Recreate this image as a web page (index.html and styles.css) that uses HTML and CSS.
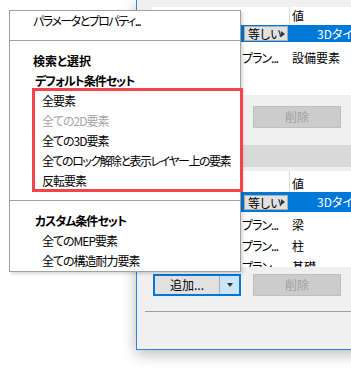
FILE: index.html
```html
<!DOCTYPE html>
<html lang="ja">
<head>
  <meta charset="UTF-8">
  <meta name="viewport" content="width=device-width, initial-scale=1.0">
  <title>フィルタ</title>
  <link rel="stylesheet" href="styles.css">
</head>
<body>
  <div class="dialog">
    <div class="grid grid-top">
      <div class="grid-head"><span></span><span></span><span class="head-val">値</span></div>
      <div class="grid-row selected">
        <span></span>
        <span class="cond"><span class="op">等しい<i class="tri"></i></span></span>
        <span class="val">3Dタイプ</span>
      </div>
      <div class="grid-row">
        <span></span><span class="cond">プラン...</span><span class="val">設備要素</span>
      </div>
    </div>

    <div class="actions actions-top">
      <div class="btn">追加...</div>
      <div class="btn btn-off">削除</div>
    </div>

    <div class="band"></div>

    <div class="grid grid-bottom">
      <div class="grid-head"><span></span><span></span><span class="head-val">値</span></div>
      <div class="grid-row selected">
        <span></span>
        <span class="cond"><span class="op">等しい<i class="tri"></i></span></span>
        <span class="val">3Dタイプ</span>
      </div>
      <div class="grid-row">
        <span></span><span class="cond">プラン...</span><span class="val">梁</span>
      </div>
      <div class="grid-row">
        <span></span><span class="cond">プラン...</span><span class="val">柱</span>
      </div>
      <div class="grid-row">
        <span></span><span class="cond">プラン...</span><span class="val">基礎</span>
      </div>
    </div>

    <div class="actions actions-bottom">
      <div class="split">
        <span class="split-main">追加...</span>
        <span class="split-drop"><i class="down"></i></span>
      </div>
      <div class="btn btn-off">削除</div>
    </div>

    <div class="rule"></div>
  </div>

  <!-- popup menu over the dialog -->
  <div class="menu">
    <div class="menu-item first">パラメータとプロパティ...</div>
    <div class="menu-sep"></div>
    <div class="menu-head kanji">検索と選択</div>
    <div class="menu-head">デフォルト条件セット</div>
    <div class="menu-item">全要素</div>
    <div class="menu-item disabled">全ての2D要素</div>
    <div class="menu-item">全ての3D要素</div>
    <div class="menu-item long">全てのロック解除と表示レイヤー上の要素</div>
    <div class="menu-item">反転要素</div>
    <div class="menu-sep"></div>
    <div class="menu-head">カスタム条件セット</div>
    <div class="menu-item">全てのMEP要素</div>
    <div class="menu-item">全ての構造耐力要素</div>
  </div>

  <div class="highlight"></div>
</body>
</html>
```

FILE: styles.css
```css
* {
  box-sizing: border-box;
}

body {
  margin: 0;
  width: 351px;
  height: 372px;
  overflow: hidden;
  position: relative;
  background: #fff;
  color: #000;
  font-family: "Noto Sans CJK JP", "Noto Sans", sans-serif;
  font-size: 12px;
  font-feature-settings: "palt";
}

/* dialog behind the menu */
.dialog {
  margin-left: 136px;
  width: 260px;
  height: 350px;
  padding-top: 7px;
  background: #f0f0f0;
  border-left: 1px solid #2a85d6;
  border-bottom: 1px solid #2a85d6;
  box-shadow: 0 4px 14px rgba(0, 0, 0, .28);
}

.grid {
  margin-left: 15px;
  background: #fff;
  overflow: hidden;
}
.grid-top {
  height: 88px;
}
.grid-bottom {
  height: 96px;
  margin-top: 4px;
}

.grid-head,
.grid-row {
  display: grid;
  grid-template-columns: 89px 48px 1fr;
  line-height: 14px;
  white-space: nowrap;
}
.grid-top .grid-head {
  height: 18px;
}
.grid-bottom .grid-head {
  height: 21px;
}
.head-val {
  border-left: 1px solid #dcdcdc;
  padding-left: 2px;
}
.grid-top .head-val {
  padding-top: 2px;
}
.grid-bottom .head-val {
  padding-top: 6px;
}

.grid-row {
  height: 21px;
  align-items: center;
}
.grid-top .selected {
  height: 17px;
}
.grid-top .selected + .grid-row {
  margin-top: 5px;
}
.grid-bottom .selected {
  height: 20px;
}
.grid-bottom .selected + .grid-row {
  margin-top: 2px;
}
.selected {
  background: #0078d7;
  color: #fff;
}

.cond {
  padding-left: 1px;
  overflow: hidden;
  letter-spacing: -1px;
}
.val {
  padding-left: 3px;
}
.selected .val {
  padding-left: 28px;
}

.op {
  display: flex;
  align-items: center;
  margin-left: 2px;
  width: 44px;
  height: 15px;
  padding: 0 2px 0 3px;
  border: 1px solid #adadad;
  background: #e1e1e1;
  color: #000;
  line-height: 13px;
  letter-spacing: 0;
}
.tri {
  margin-left: auto;
  border-left: 4px solid #333;
  border-top: 3px solid transparent;
  border-bottom: 3px solid transparent;
}

/* buttons */
.actions {
  display: flex;
  gap: 12px;
  margin-left: 16px;
  height: 22px;
}
.actions-top {
  margin-top: 11px;
}
.actions-bottom {
  margin-top: 7px;
}
.btn {
  width: 88px;
  height: 22px;
  line-height: 20px;
  text-align: center;
  background: #e1e1e1;
  border: 1px solid #adadad;
}
.btn-off {
  background: #cccccc;
  border-color: #bfbfbf;
  color: #a0a0a0;
}

.split {
  display: flex;
  width: 88px;
  height: 22px;
  border: 2px solid #0078d7;
  line-height: 18px;
}
.split-main {
  width: 65px;
  text-align: center;
  background: #e1e1e1;
  border-right: 1px solid #adadad;
}
.split-drop {
  flex: 1;
  display: flex;
  align-items: center;
  justify-content: center;
  background: #cce4f7;
}
.down {
  border-top: 4px solid #333;
  border-left: 3px solid transparent;
  border-right: 3px solid transparent;
}

.band {
  margin-top: 17px;
  height: 22px;
  background: #d9d9d9;
}

.rule {
  margin: 15px 0 0 8px;
  border-top: 1px solid #a0a0a0;
}

/* popup menu */
.menu {
  position: absolute;
  left: 9px;
  top: 10px;
  width: 232px;
  background: #fff;
  border: 1px solid #a0a0a0;
  box-shadow: 2px 2px 3px rgba(0, 0, 0, .15);
  white-space: nowrap;
  letter-spacing: -1px;
}
.menu-item {
  height: 20px;
  line-height: 20px;
  padding-left: 32px;
}
.menu-item.first {
  padding-left: 23px;
}
.menu-item.first,
.menu-item.long {
  letter-spacing: -1.5px;
}
.menu-head {
  height: 20px;
  line-height: 20px;
  padding-left: 25px;
  font-weight: bold;
}
.menu-head.kanji {
  padding-left: 23px;
  letter-spacing: 0;
}
.menu-sep {
  margin: 9px 0 10px;
  border-top: 1px solid #a0a0a0;
}
.disabled {
  color: #a6a6a6;
}

/* red annotation frame */
.highlight {
  position: absolute;
  left: 32px;
  top: 88px;
  width: 211px;
  height: 104px;
  border: 3px solid #f5434a;
}
```
